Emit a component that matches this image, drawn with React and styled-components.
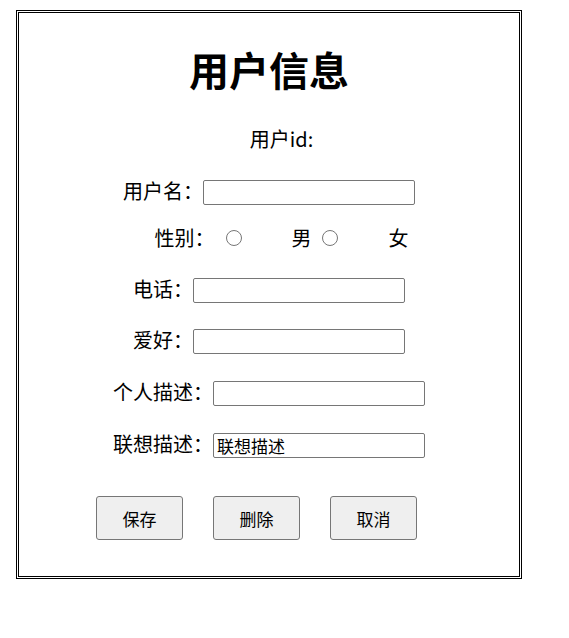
import React from 'react';
import styled, { createGlobalStyle } from 'styled-components';

const GlobalStyle = createGlobalStyle`
  body {
    margin: 0;
    padding: 0;
    background: #fff;
    font-family: 'Noto Sans CJK SC', 'Noto Sans', sans-serif;
    color: #000;
  }
`;

const Panel = styled.form`
  box-sizing: border-box;
  width: 506px;
  height: 569px;
  margin: 10px 0 0 16px;
  border: 3px double #000;
  padding-top: 27px;
  display: flex;
  flex-direction: column;
  align-items: stretch;
  font-size: 20px;
`;

const Title = styled.h1`
  margin: 0;
  height: 58px;
  line-height: 58px;
  font-size: 40px;
  font-weight: 700;
  text-align: center;
`;

const Row = styled.div`
  height: 30px;
  margin-top: ${p => p.$mt}px;
  padding-left: ${p => p.$shift || 0}px;
  display: flex;
  align-items: center;
  justify-content: center;
  line-height: 30px;
  white-space: nowrap;
`;

const Label = styled.span`
  margin-bottom: ${p => (p.$lift ? 3 : 0)}px;
`;

const TextInput = styled.input`
  box-sizing: border-box;
  width: 212px;
  height: 25px;
  margin: 0;
  padding: 0 3px;
  border: 1px solid #767676;
  border-radius: 2px;
  font-family: 'Noto Sans CJK SC', sans-serif;
  font-size: 17px;
  color: #000;
  background: #fff;
  outline: none;
`;

const Radio = styled.input`
  width: 16px;
  height: 16px;
  margin: 0 0 0 ${p => p.$ml}px;
`;

const Choice = styled.span`
  margin-left: ${p => p.$ml}px;
`;

const ButtonBar = styled.div`
  margin-top: 36px;
  padding-left: 77px;
  display: flex;
  gap: 30px;
`;

const Button = styled.button`
  box-sizing: border-box;
  width: 87px;
  height: 44px;
  padding: 0;
  border: 1px solid #767676;
  border-radius: 3px;
  background: #efefef;
  font-family: 'Noto Sans CJK SC', sans-serif;
  font-size: 17px;
  color: #000;
`;

const fields = [
  { label: '用户名：', mt: 23 },
  { label: '电话：', mt: 22.5 },
  { label: '爱好：', mt: 21 },
  { label: '个人描述：', mt: 22 },
  { label: '联想描述：', mt: 22, value: '联想描述' },
];

const FieldRow = ({ label, mt, value }) => (
  <Row $mt={mt}>
    <Label $lift>{label}</Label>
    <TextInput type="text" defaultValue={value} />
  </Row>
);

export default function App() {
  return (
    <>
      <GlobalStyle />
      <Panel onSubmit={e => e.preventDefault()}>
        <Title>用户信息</Title>
        <Row $mt={26} $shift={25}>
          <Label>用户id:</Label>
        </Row>
        <FieldRow {...fields[0]} />
        <Row $mt={15.5} $shift={25}>
          <Label>性别：</Label>
          <Radio type="radio" name="sex" $ml={11} />
          <Choice $ml={50}>男</Choice>
          <Radio type="radio" name="sex" $ml={10} />
          <Choice $ml={51}>女</Choice>
        </Row>
        {fields.slice(1).map(f => (
          <FieldRow key={f.label} {...f} />
        ))}
        <ButtonBar>
          <Button type="button">保存</Button>
          <Button type="button">删除</Button>
          <Button type="button">取消</Button>
        </ButtonBar>
      </Panel>
    </>
  );
}
